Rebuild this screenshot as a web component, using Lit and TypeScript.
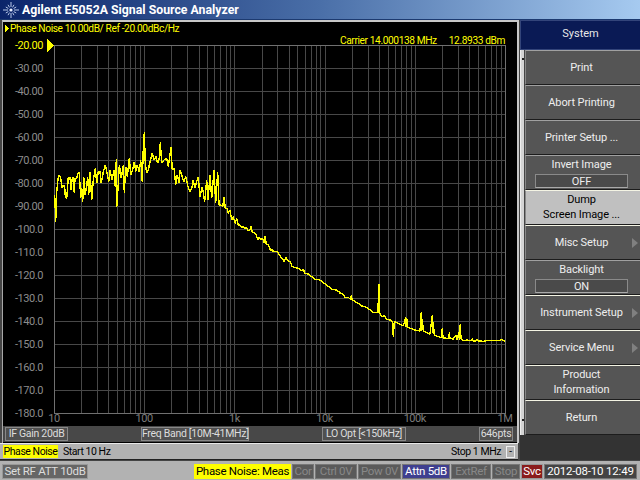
import { LitElement, html, css, svg } from "lit";
import { customElement } from "lit/decorators.js";

const PLOT = { left: 54, right: 505, top: 45, bottom: 413 };
const DECADE = (PLOT.right - PLOT.left) / 5;

const Z1 = [44,265,44,225,47,305,50,215,55,170,58,165,62,175,67,205,70,195,74,200,76,230,80,235,85,172,90,172,93,210,96,180,99,172,103,220,105,175,110,175,114,160,118,158,122,235,125,205,128,245,131,170,135,225,138,210,143,172,146,225,150,155,155,240,160,180,166,145,170,190,175,155,180,155,184,190,190,155,196,135,200,155,206,185,210,150,216,180,222,150,226,200,229,118,230,262,234,205,238,135,244,175,250,135,253,218,257,140,262,170,268,115,272,165,278,150,283,125,287,155,292,135,298,155,302,120,307,185,310,85,313,37,316,130,320,160,325,150,330,125,337,98,342,120,348,110,353,130,358,115,361,67,365,130,372,120,380,115,385,140,390,105,393,82,397,150,402,145,407,195,412,165,418,190,420,150,425,165,431,185,437,170,444,200,450,215,455,205,460,180,464,205,470,185,475,172,480,230,487,200,494,245,500,180,504,240,510,165,515,235,522,150,527,250,533,155,537,255,543,255,548,260,552,230,556,265,562,265,565,280,570,270,575,300,580,290,585,310,590,295,595,315,600,315];
const Z2 = [0,45,5,52,10,50,15,55,20,53,25,62,30,60,34,48,36,65,42,68,48,72,53,90,58,82,63,88,68,85,72,100,76,78,78,100,85,105,92,122,97,118,100,125,108,124,115,128,120,138,130,150,133,155,137,142,142,150,150,155,157,170,163,172,175,175,185,182,190,178,195,190,205,192,215,200,225,208,240,210,250,218,260,225,275,238,290,240,300,248];
const Z3 = [0,70,8,72,15,82,25,82,33,90,34,75,36,88,45,95,55,100,65,108,80,112,90,120,100,127,112,128,112,100,115,130,115,55,118,42,119,130,125,140,132,137,140,147,150,150,158,155,160,200,163,155,170,157,180,163,190,168,197,142,198,170,200,145,203,172,215,176,225,180,240,183,244,127,245,183,247,148,250,183,260,188,270,192,277,135,278,190,280,157,283,195,295,200,305,203,307,175,309,203,318,205,327,205,328,185,330,205,340,207,347,195,352,210,357,185,358,210,361,162,363,205,370,212,380,210,395,212,397,205,400,213,410,212,412,208,416,213,430,214,445,211,480,212,482,208,495,214];

function toPts(a: number[], ox: number, oy: number): string[] {
  const out: string[] = [];
  for (let i = 0; i < a.length; i += 2) {
    out.push(`${(ox + a[i] / 3).toFixed(1)},${(oy + a[i + 1] / 3).toFixed(1)}`);
  }
  return out;
}
const TRACE = [...toPts(Z1, 40, 120), ...toPts(Z2, 240, 210), ...toPts(Z3, 340, 270)].join(" ");

const YLABELS = ["-20.00","-30.00","-40.00","-50.00","-60.00","-70.00","-80.00","-90.00","-100.0","-110.0","-120.0","-130.0","-140.0","-150.0","-160.0","-170.0","-180.0"];
const XLABELS = ["10","100","1k","10k","100k","1M"];

const KEYS = [
  { label: "Print" },
  { label: "Abort Printing" },
  { label: "Printer Setup ..." },
  { label: "Invert Image", value: "OFF" },
  { label: "Dump", label2: "Screen Image ...", active: true, hi: true },
  { label: "Misc Setup", arrow: true, hi: true },
  { label: "Backlight", value: "ON" },
  { label: "Instrument Setup", arrow: true, hi: true },
  { label: "Service Menu", arrow: true, hi: true },
  { label: "Product", label2: "Information", hi: true },
  { label: "Return", hi: true },
];

@customElement("app-root")
export class AppRoot extends LitElement {
  static styles = css`
    :host { display: block; width: 640px; height: 480px; overflow: hidden; background: #454545;
      font-family: Roboto, "Liberation Sans", Arial, sans-serif; font-size: 11px; color: #eee; }
    .title { height: 19px; display: flex; align-items: center; gap: 3px; padding-left: 3px;
      background: linear-gradient(90deg, #0a246a 0%, #4a6fa8 50%, #a6caf0 100%); border-bottom: 1px solid #1c3a70;
      color: #fff; font-weight: bold; font-size: 12.3px; }
    .title svg { display: block; }
    .main { display: flex; height: 440px; }
    .left { width: 520px; display: flex; flex-direction: column; }
    .panel { margin: 0 1px 0 2px; border-top: 2px solid #c8c8c8; border-right: 2px solid #c8c8c8; border-left: 1px solid #a8a8a8; background: #000; height: 423px; box-sizing: border-box; }
    .plot { display: block; width: 514px; height: 404px; background: #000; }
    .plot text { font-family: Roboto, "Liberation Sans", Arial, sans-serif; font-size: 11px; letter-spacing: -0.45px; fill: #8c8c8c; }
    .plot .yl { fill: #ffff00; }
    .plot .hd { font-size: 10.2px; letter-spacing: -0.4px; }
    .plot .end { text-anchor: end; }
    .plot .mid { text-anchor: middle; fill: #7c7c7c; }
    .infobar { height: 16px; display: grid; grid-template-columns: 136px 181px 157px 1fr; align-items: center;
      background: #484848; padding-left: 2px; }
    .ibox { justify-self: start; height: 14px; line-height: 12px; box-sizing: border-box; border: 1px solid #888;
      text-align: center; color: #ddd; font-size: 10.5px; letter-spacing: -0.3px; white-space: nowrap; background: #505050; }
    .w1 { width: 63px; } .w2 { width: 108px; } .w3 { width: 84px; } .w4 { width: 34px; }
    .sweep { height: 17px; box-sizing: border-box; display: flex; align-items: center; background: #b2b2b2; color: #000;
      border-top: 1px solid #e8e8e8; border-bottom: 1px solid #222; margin-right: 2px; padding: 0 3px; font-size: 10.5px; letter-spacing: -0.45px; }
    .tag-y { background: #ffff00; color: #000; width: 55px; text-align: center; height: 13px; line-height: 13px; margin-right: 5px; white-space: nowrap; }
    .grow { flex: 1; }
    .mini { width: 9px; height: 12px; margin-left: 5px; border: 1px solid #eee; background: #b2b2b2; box-sizing: border-box;
      text-align: center; line-height: 9px; font-size: 10px; }

    .right { width: 120px; display: flex; flex-direction: column; }
    .head { height: 30px; box-sizing: border-box; background: #0a1a55; border-top: 1px solid #33447a; border-bottom: 1px solid #33447a;
      border-left: 1px solid #33447a; text-align: center; line-height: 26px; color: #e8e8e8; font-size: 11px; }
    .keys { display: flex; flex: none; }
    .strip { width: 4px; margin-right: 1px; background: #d4d4d4; border-left: 1px solid #eee; box-sizing: border-box; flex: none; position: relative; }
    .strip::before { content: ""; position: absolute; left: 1px; top: 8px; width: 2px; height: 2px; background: #222; }
    .strip::after { content: ""; position: absolute; left: 1px; bottom: 14px; width: 2px; height: 2px; background: #222; }
    .list { flex: 1; display: flex; flex-direction: column; }
    .key { height: 35px; box-sizing: border-box; background: #555; border-top: 1px solid #a0a0a0; border-left: 1px solid #888;
      border-bottom: 1px solid #1c1c1c; color: #eee; display: flex; flex-direction: column; align-items: center; justify-content: center;
      font-size: 11px; letter-spacing: -0.1px; position: relative; padding: 0 3px 1px 0; line-height: 15px; }
    .key.hi { border-top: 1px solid #f4f4e4; }
    .key.active { background: #c0c0c0; color: #000; }
    .val { width: 93px; height: 14px; line-height: 13px; box-sizing: border-box; border: 1px solid #8a8a8a; border-bottom-color: #aaa; background: #4a4a4a;
      text-align: center; margin-top: 2px; }
    .arrow { position: absolute; right: 2px; top: 50%; margin-top: -5px; border-left: 6px solid #808080;
      border-top: 5px solid transparent; border-bottom: 5px solid transparent; }
    .rest { flex: 1; background: #333; }

    .status { height: 20px; display: flex; align-items: center; background: #b2b2b2; border-top: 1px solid #444; box-sizing: border-box; padding: 2px 2px 1px 2px; gap: 1px; font-size: 11.5px; letter-spacing: -0.3px; }
    .st { height: 15px; box-sizing: border-box; text-align: center; white-space: nowrap; flex: none;
      background: #5a5a5a; color: #888; border: 1px solid #777; line-height: 13px; }
    .st.msg { width: 86px; color: #ddd; background: #666; border-color: #999; margin-right: 105px; }
    .st.meas { width: 97px; background: #ffff00; color: #000; border-color: #ffff00; }
    .st.cor { width: 22px; } .st.ctrl { width: 42px; } .st.pow { width: 43px; }
    .st.attn { width: 48px; background: #3f3f8f; color: #fff; border-color: #777; }
    .st.ext { width: 40px; } .st.stop { width: 28px; }
    .st.svc { width: 22px; background: #8a1c1c; color: #fff; border-color: #999; }
    .st.date { width: 93px; background: #444; color: #fff; border-color: #777; letter-spacing: -0.2px; }
  `;

  private logo() {
    const rays = [];
    for (let i = 0; i < 12; i++) {
      const a = (i * Math.PI) / 6;
      const r = i % 3 === 0 ? 8 : 6;
      rays.push(svg`<line x1=${8 + Math.cos(a) * 3} y1=${8 + Math.sin(a) * 3} x2=${8 + Math.cos(a) * r} y2=${8 + Math.sin(a) * r} />`);
    }
    return html`<svg width="16" height="16" viewBox="0 0 16 16" stroke="#b8c8e8" stroke-width="1" fill="none">${rays}<circle cx="8" cy="8" r="1.6" fill="#e8eeff" stroke="none" /></svg>`;
  }

  private grid() {
    const { left, right, top, bottom } = PLOT;
    const lines = [];
    for (let i = 1; i <= 16; i++) {
      const y = top + i * 23;
      lines.push(svg`<line x1=${left} x2=${right} y1=${y + 0.5} y2=${y + 0.5} stroke="#484848" />`);
    }
    for (let d = 0; d < 5; d++) {
      for (let m = 2; m <= 10; m++) {
        const x = Math.round(left + (d + Math.log10(m)) * DECADE);
        lines.push(svg`<line x1=${x + 0.5} x2=${x + 0.5} y1=${top} y2=${bottom} stroke="#484848" />`);
      }
    }
    return lines;
  }

  private plot() {
    const { left, right, top, bottom } = PLOT;
    return html`<svg class="plot" viewBox="3 22 514 404" shape-rendering="crispEdges">
      ${this.grid()}
      <rect x=${left + 0.5} y=${top + 0.5} width=${right - left} height=${bottom - top} fill="none" stroke="#707070" />
      <polygon points="5,25 9,28.5 5,32" fill="#ffff00" />
      <text x="10" y="32" class="yl hd">Phase Noise 10.00dB/ Ref -20.00dBc/Hz</text>
      <text x="340" y="44" class="yl hd">Carrier 14.000138 MHz</text>
      <text x="505" y="44" class="yl hd end">12.8933 dBm</text>
      <polygon points="47,39 54,45.5 47,52" fill="#ffff00" />
      ${YLABELS.map((l, i) => svg`<text x="43" y=${49 + i * 23} class=${i === 0 ? "yl end" : "end"}>${l}</text>`)}
      ${XLABELS.map((l, i) => svg`<text x=${left + i * DECADE} y="422" class="mid">${l}</text>`)}
      <polyline points=${TRACE} fill="none" stroke="#ffff00" stroke-width="1.4" stroke-linejoin="bevel" />
    </svg>`;
  }

  render() {
    return html`
      <div class="title">${this.logo()}<span>Agilent E5052A Signal Source Analyzer</span></div>
      <div class="main">
        <div class="left">
          <div class="panel">
            ${this.plot()}
            <div class="infobar">
              <div class="ibox w1">IF Gain 20dB</div>
              <div class="ibox w2">Freq Band [10M-41MHz]</div>
              <div class="ibox w3">LO Opt [&lt;150kHz]</div>
              <div class="ibox w4">646pts</div>
            </div>
          </div>
          <div class="sweep">
            <span class="tag-y">Phase Noise</span><span>Start 10 Hz</span>
            <span class="grow"></span><span>Stop 1 MHz</span><span class="mini">-</span>
          </div>
        </div>
        <div class="right">
          <div class="head">System</div>
          <div class="keys">
            <div class="strip"></div>
            <div class="list">
              ${KEYS.map((k) => html`<div class="key ${k.hi ? "hi" : ""} ${k.active ? "active" : ""}">
                <span>${k.label}</span>
                ${k.label2 ? html`<span>${k.label2}</span>` : ""}
                ${k.value ? html`<div class="val">${k.value}</div>` : ""}
                ${k.arrow ? html`<span class="arrow"></span>` : ""}
              </div>`)}
            </div>
          </div>
          <div class="rest"></div>
        </div>
      </div>
      <div class="status">
        <div class="st msg">Set RF ATT 10dB</div>
        <div class="st meas">Phase Noise: Meas</div>
        <div class="st cor">Cor</div>
        <div class="st ctrl">Ctrl 0V</div>
        <div class="st pow">Pow 0V</div>
        <div class="st attn">Attn 5dB</div>
        <div class="st ext">ExtRef</div>
        <div class="st stop">Stop</div>
        <div class="st svc">Svc</div>
        <div class="st date">2012-08-10 12:49</div>
      </div>
    `;
  }
}
